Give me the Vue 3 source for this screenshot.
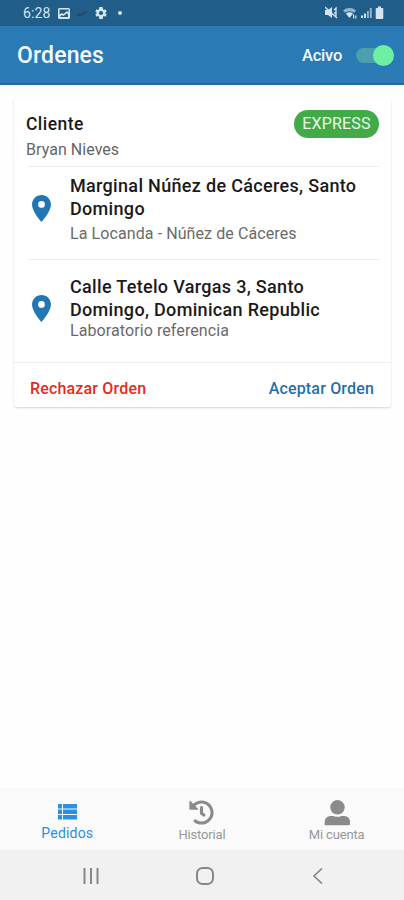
<script setup>
const stops = [
  { id: 'pickup', title: ['Marginal Núñez de Cáceres, Santo', 'Domingo'], place: 'La Locanda - Núñez de Cáceres' },
  { id: 'dropoff', title: ['Calle Tetelo Vargas 3, Santo', 'Domingo, Dominican Republic'], place: 'Laboratorio referencia' },
]
</script>

<template>
  <div class="screen">
    <div class="status">
      <span class="clock">6:28</span>
      <svg class="s-img" viewBox="0 0 12 11"><path fill-rule="evenodd" d="M1.500 0h9A1.500 1.500 0 0 1 12 1.500v8a1.500 1.500 0 0 1-1.500 1.500h-9A1.500 1.500 0 0 1 0 9.500v-8A1.500 1.500 0 0 1 1.500 0zM1.500 1.500v5l2.300-1.500 1.700 1 3.500-3 1.500 1.500v-3zM2 9h8V6.500L8.800 5.300 5.500 8 3.800 7z" /></svg>
      <svg class="s-check" viewBox="0 0 12 7"><path d="M1 4.500l3 1 7-4" /></svg>
      <svg class="s-gear" viewBox="2 2 20 20"><path fill-rule="evenodd" d="M19.400 13a7.500 7.500 0 0 0 0-2l2.100-1.600-2-3.500-2.500 1a7.300 7.300 0 0 0-1.700-1L14.900 2h-5.800l-.4 3.900a7.300 7.300 0 0 0-1.700 1l-2.500-1-2 3.500L4.600 11a7.500 7.500 0 0 0 0 2l-2.100 1.600 2 3.500 2.500-1a7.300 7.300 0 0 0 1.700 1l.4 3.900h5.800l.4-3.900a7.300 7.300 0 0 0 1.700-1l2.500 1 2-3.500zM12 15.500a3.500 3.500 0 1 1 0-7 3.500 3.500 0 0 1 0 7z" /></svg>
      <span class="dot"></span>
      <span class="grow"></span>
      <svg class="s-right" viewBox="0 0 60 14">
        <path d="M0 4h3l4-3v11L3 9H0z" />
        <path class="ln" d="M0 1l12 11M9 4l2-2v9M9 7h2" />
        <path d="M18 4.500a10 10 0 0 1 13 0l-2 2.300a7 7 0 0 0-9 0z" opacity=".65" />
        <path d="M21 7.800a5 5 0 0 1 7 0L24.500 12z" />
        <path d="M28 8.500h1.200v4H28zM30.200 9.500h1.200v3h-1.200z" />
        <path d="M36 9.500h2v2.500h-2zM39 7.500h2V12h-2z" />
        <path d="M42 5h1.800v7H42zM44.800 2h2v10h-2z" opacity=".65" />
        <path d="M53 .5h3v1.500h1.500q.8 0 .8.800V12q0 1-1 1h-5.600q-1 0-1-1V2.800q0-.8.800-.8H53z" />
      </svg>
    </div>

    <header class="bar">
      <h1>Ordenes</h1>
      <span class="active">Acivo</span>
      <span class="switch"><span class="knob"></span></span>
    </header>

    <main>
      <section class="card">
        <div class="client">
          <div>
            <div class="label">Cliente</div>
            <div class="name">Bryan Nieves</div>
          </div>
          <span class="badge">EXPRESS</span>
        </div>
        <div v-for="s in stops" :key="s.id" class="stop" :class="s.id">
          <svg class="pin" viewBox="5 2 14 20"><path d="M12 2C8.130 2 5 5.130 5 9c0 5.250 7 13 7 13s7-7.750 7-13c0-3.870-3.130-7-7-7zm0 9.500a2.500 2.500 0 1 1 0-5 2.500 2.500 0 0 1 0 5z" /></svg>
          <div>
            <div class="title"><div v-for="line in s.title" :key="line">{{ line }}</div></div>
            <div class="place">{{ s.place }}</div>
          </div>
        </div>
        <div class="actions">
          <span class="reject">Rechazar Orden</span>
          <span class="accept">Aceptar Orden</span>
        </div>
      </section>
    </main>

    <nav class="tabs">
      <div class="tab on">
        <svg class="i-list" viewBox="0 0 19 16"><path d="M0 0h4v4.500H0zM5 0h14v4.500H5zM0 5.500h4v4.500H0zM5 5.500h14v4.500H5zM0 11h4v4.500H0zM5 11h14v4.500H5z" /></svg>
        <span>Pedidos</span>
      </div>
      <div class="tab history">
        <svg class="i-hist" viewBox="0 0 512 512"><path d="M504 255.500c.3 136.600-111.200 248.400-247.800 248.500-59 0-113.200-20.500-155.800-54.900-11.100-8.900-11.900-25.500-1.800-35.600l11.300-11.300c8.600-8.600 22.400-9.600 31.900-2C173.100 425.100 212.800 440 256 440c101.700 0 184-82.300 184-184 0-101.700-82.300-184-184-184-48.800 0-93.100 19-126.100 49.900l50.800 50.800c10.100 10.100 2.900 27.300-11.300 27.300H24c-8.800 0-16-7.200-16-16V38.600c0-14.300 17.200-21.400 27.300-11.300l49.400 49.400C129.200 34.100 189.600 8 256 8c136.800 0 247.700 110.800 248 247.500zm-180.900 78.800l9.800-12.600c8.100-10.500 6.300-25.500-4.200-33.700L288 256.300V152c0-13.300-10.700-24-24-24h-16c-13.300 0-24 10.700-24 24v135.700l65.400 50.900c10.500 8.100 25.500 6.300 33.700-4.300z" /></svg>
        <span>Historial</span>
      </div>
      <div class="tab account">
        <svg class="i-user" viewBox="0 0 26 26"><circle cx="13.500" cy="7.300" r="7.200" /><path d="M.7 25.300V22.500q0-6.300 6-6.500h2.800q4 1.700 8 0h2.800q5.700.2 5.700 6.500v1.300q0 1.500-1.500 1.500z" /></svg>
        <span>Mi cuenta</span>
      </div>
    </nav>

    <div class="system">
      <svg viewBox="0 0 16 16"><path d="M1.500 0v16M8 0v16M14.500 0v16" /></svg>
      <svg viewBox="0 0 18 18"><rect x="1" y="1" width="16" height="16" rx="5.500" /></svg>
      <svg viewBox="0 0 16 16"><path d="M12 .5L4 8l8 7.500" /></svg>
    </div>
  </div>
</template>

<style>
body { margin: 0; background: #fefefe; }
</style>

<style scoped>
.screen { width: 404px; height: 900px; display: flex; flex-direction: column; background: #fefefe; font-family: Roboto, "Liberation Sans", sans-serif; overflow: hidden; white-space: nowrap; }
svg { display: block; flex: none; }
.status { height: 26px; box-sizing: border-box; background: #205d89; display: flex; align-items: center; padding: 0 19px 0 23px; color: #d5e5ef; fill: #d5e5ef; }
.clock { width: 35px; font-size: 14px; line-height: 26px; letter-spacing: .1px; }
.s-img { width: 12px; height: 11px; }
.s-check { width: 12px; height: 7px; margin-left: 6px; fill: none; stroke: #26465f; stroke-width: 1.5; }
.s-gear { width: 12px; height: 12px; margin-left: 7px; }
.dot { width: 4px; height: 4px; border-radius: 50%; background: #d5e5ef; margin-left: 11px; }
.grow { flex: 1; }
.s-right { width: 60px; height: 14px; }
.ln { fill: none; stroke: #d5e5ef; stroke-width: 1.3; }
.bar { height: 59px; box-sizing: border-box; background: #2a7ab6; border-bottom: 2px solid #236b9f; display: flex; align-items: center; padding: 1px 10px 0 17px; color: #f5faff; }
h1 { margin: 0; flex: 1; font-size: 23px; font-weight: 500; line-height: 30px; letter-spacing: .15px; padding-top: 1px; }
.active { font-size: 16.500px; font-weight: 500; margin-right: 14px; letter-spacing: -.25px; }
.switch { width: 38px; height: 22px; display: flex; align-items: center; }
.switch::before { content: ""; width: 30px; height: 15px; border-radius: 8px; background: #4b9fae; flex: none; }
.knob { width: 21px; height: 21px; border-radius: 50%; background: #6df0a3; margin-left: -13px; flex: none; }
main { flex: 1; padding: 13px 13px 0 14px; }
.card { height: 309px; background: #fff; border-radius: 3px; box-shadow: 0 1px 2px rgba(0, 0, 0, .17); display: flex; flex-direction: column; }
.client { height: 69px; box-sizing: border-box; margin: 0 12px 0 14px; border-bottom: 1px solid #ededed; display: flex; justify-content: space-between; align-items: flex-start; padding-top: 12px; }
.client > div { margin-left: -2px; }
.label { font-size: 17.500px; font-weight: 500; line-height: 28px; color: #1a1a1a; letter-spacing: .45px; }
.name { font-size: 16px; line-height: 23px; color: #666; letter-spacing: .05px; }
.badge { width: 85px; height: 28px; border-radius: 14px; background: #42ab48; color: #e8fae8; font-size: 16px; line-height: 28px; text-align: center; letter-spacing: .2px; }
.stop { box-sizing: border-box; margin: 0 12px 0 14px; display: flex; gap: 19px; padding-left: 4px; }
.pin { width: 19px; height: 27px; fill: #2376b4; }
.pickup { height: 93px; border-bottom: 1px solid #ededed; padding-top: 8px; }
.dropoff { height: 102px; padding-top: 16px; }
.pickup .pin { margin-top: 20px; }
.dropoff .pin { margin-top: 19px; }
.title { font-size: 18px; font-weight: 500; line-height: 22.500px; color: #1a1a1a; letter-spacing: .32px; }
.place { font-size: 16px; line-height: 20px; color: #6a6a6a; letter-spacing: .09px; }
.pickup .place { padding-top: 4px; }
.actions { height: 45px; box-sizing: border-box; border-top: 1px solid #ededed; display: flex; justify-content: space-between; align-items: center; padding: 6px 17px 0 16px; font-size: 16px; font-weight: 500; letter-spacing: .17px; }
.reject { color: #e52b20; }
.accept { color: #2470ac; }
.tabs { height: 62px; background: #fafafa; display: grid; grid-template-columns: repeat(3, 1fr); }
.tab { display: flex; flex-direction: column; align-items: center; color: #999; fill: #8b8b8b; font-size: 13px; }
.tab span { line-height: 16px; }
.history, .account { letter-spacing: -.15px; }
.on { color: #2b8fe2; fill: #2b8fe2; font-size: 14px; letter-spacing: .2px; }
.i-list { width: 19px; height: 16px; margin: 16px 0 5px; }
.i-hist { width: 25px; height: 25px; margin: 12px 0 2px; }
.i-user { width: 26px; height: 26px; margin: 12px 0 1px; }
.system { height: 50px; box-sizing: border-box; background: #f1f1f1; display: flex; align-items: center; justify-content: space-between; padding: 1px 78px 0 83px; fill: none; stroke: #888; stroke-width: 2; }
.system svg { width: 16px; height: 16px; }
.system svg:nth-child(2) { width: 18px; height: 18px; }
.system svg:nth-child(3) { stroke-width: 1.700; }
</style>
